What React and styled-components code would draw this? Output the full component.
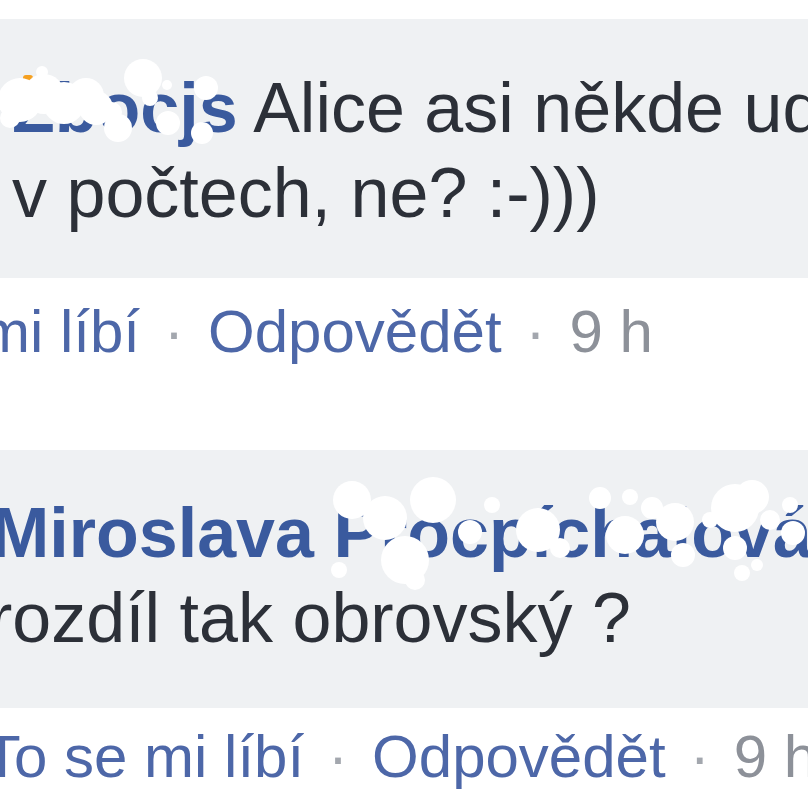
import React from 'react';
import styled, { createGlobalStyle } from 'styled-components';

const GlobalStyle = createGlobalStyle`
  html, body { margin: 0; padding: 0; background: #ffffff; }
  body { font-family: "Liberation Sans", Arial, sans-serif; }
`;

const Page = styled.main`
  position: relative;
  width: 808px;
  height: 808px;
  overflow: hidden;
  background: #ffffff;
  padding-top: 19px;
  box-sizing: border-box;
  font-family: "Liberation Sans", Arial, sans-serif;
  filter: blur(0.6px);
`;

const Thread = styled.section`
  display: flex;
  flex-direction: column;
  gap: 76px;
`;

const Comment = styled.article`
  display: flex;
  flex-direction: column;
`;

const Bubble = styled.div`
  background: #eff1f3;
  padding: ${(p) => p.$pt}px 0 ${(p) => p.$pb}px;
`;

const Line = styled.p`
  margin: 0 0 0 ${(p) => p.$indent}px;
  white-space: nowrap;
  font-size: 70px;
  line-height: 85px;
  color: #2c3038;
`;

const Name = styled.a`
  font-weight: 700;
  color: #3a5a9e;
  text-decoration: none;
`;

const Footer = styled.div`
  display: flex;
  align-items: baseline;
  white-space: nowrap;
  margin: ${(p) => p.$mt}px 0 0 ${(p) => p.$indent}px;
  font-size: 60px;
  line-height: 85px;
`;

const Action = styled.a`
  color: #4d67a8;
  text-decoration: none;
`;

const Sep = styled.span`
  color: #a3a7ae;
  padding: 0 24px;
`;

const Time = styled.span`
  color: #8d9199;
`;

const Redactions = styled.svg`
  position: absolute;
  top: 0;
  left: 0;
  pointer-events: none;
`;

const blots = [
  // first name
  [20, 100, 22], [44, 94, 20], [64, 103, 21], [86, 96, 18], [96, 108, 17],
  [118, 128, 14], [112, 112, 10], [143, 78, 19], [150, 98, 8],
  [168, 123, 12], [206, 88, 12], [202, 133, 11], [42, 72, 6], [167, 85, 5],
  [10, 118, 10],
  // second name
  [352, 500, 19], [385, 518, 22], [405, 560, 24], [433, 500, 23], [470, 532, 12],
  [492, 505, 8], [538, 530, 22], [560, 548, 10], [600, 498, 11], [630, 497, 8],
  [625, 535, 19], [652, 508, 11], [675, 522, 19], [683, 555, 12], [735, 508, 24],
  [752, 497, 17], [735, 548, 12], [770, 520, 10], [793, 533, 12], [790, 505, 8],
  [339, 570, 8], [742, 573, 8], [757, 565, 6], [415, 580, 10], [710, 520, 8],
];

function CommentFooter({ like, indent, mt }) {
  return (
    <Footer $indent={indent} $mt={mt}>
      <Action href="#">{like}</Action>
      <Sep>·</Sep>
      <Action href="#">Odpovědět</Action>
      <Sep>·</Sep>
      <Time>9 h</Time>
    </Footer>
  );
}

export default function App() {
  return (
    <>
      <GlobalStyle />
      <Page>
        <Thread>
          <Comment>
            <Bubble $pt={47} $pb={42}>
              <Line $indent={12}>
                <Name href="#">Zbocjs</Name> Alice asi někde udělala chybu
              </Line>
              <Line $indent={12}>v počtech, ne? :-)))</Line>
            </Bubble>
            <CommentFooter like="mi líbí" indent={-20} mt={11} />
          </Comment>
          <Comment>
            <Bubble $pt={41} $pb={47}>
              <Line $indent={-9}>
                <Name href="#">Miroslava Procpíchalová</Name>
              </Line>
              <Line $indent={-11}>rozdíl tak obrovský ?</Line>
            </Bubble>
            <CommentFooter like="To se mi líbí" indent={-16} mt={6} />
          </Comment>
        </Thread>
        <Redactions width="808" height="808" viewBox="0 0 808 808" aria-hidden="true">
          <rect x="23" y="75" width="10" height="6" rx="3" fill="#f5a020" />
          {blots.map(([cx, cy, r], i) => (
            <circle key={i} cx={cx} cy={cy} r={r} fill="#ffffff" />
          ))}
        </Redactions>
      </Page>
    </>
  );
}
